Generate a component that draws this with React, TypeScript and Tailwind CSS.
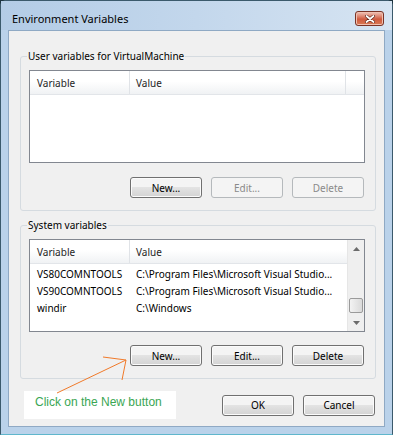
const sysRows = [
  { name: "VS80COMNTOOLS", value: "C:\\Program Files\\Microsoft Visual Studio..." },
  { name: "VS90COMNTOOLS", value: "C:\\Program Files\\Microsoft Visual Studio..." },
  { name: "windir", value: "C:\\Windows" },
];

function Button({ label, disabled = false }: { label: string; disabled?: boolean }) {
  if (disabled) {
    return (
      <button className="w-[72px] h-[21px] rounded-[3px] border border-[#b5b9bc] bg-[#f4f4f4] text-[#8a8a8a] leading-none">
        {label}
      </button>
    );
  }
  return (
    <button className="w-[72px] h-[21px] rounded-[3px] border border-[#707070] bg-linear-to-b from-[#f4f4f4] from-45% via-[#e3e3e3] via-50% to-[#d3d3d3] text-black leading-none shadow-[inset_0_0_0_1px_#fbfbfb]">
      {label}
    </button>
  );
}

function ListHeader({ filler }: { filler: boolean }) {
  return (
    <div className="flex h-[24px] border-b border-[#e2e5e9] bg-linear-to-b from-white from-45% to-[#f0f2f4] text-[#1e1e1e]">
      <div className="w-[100px] pl-[7px] pt-[1px] flex items-center border-r border-[#e0e3e7]">Variable</div>
      {filler ? (
        <>
          <div className="w-[216px] pl-[6px] pt-[1px] flex items-center border-r border-[#e0e3e7]">Value</div>
          <div className="flex-1" />
        </>
      ) : (
        <div className="flex-1 pl-[6px] pt-[1px] flex items-center">Value</div>
      )}
    </div>
  );
}

function ScrollBar() {
  return (
    <div className="w-[17px] flex flex-col bg-[#efefef] border-l border-[#e6e6e6]">
      <div className="h-[17px] flex items-center justify-center">
        <svg width="7" height="4" viewBox="0 0 7 4">
          <path d="M0 4 L3.5 0 L7 4 Z" fill="#6b6b6b" />
        </svg>
      </div>
      <div className="flex-1 flex flex-col justify-end px-[1px] pb-[1px]">
        <div className="h-[15px] rounded-[2px] border border-[#9a9a9a] bg-linear-to-r from-[#f3f3f3] to-[#dadada]" />
      </div>
      <div className="h-[17px] flex items-center justify-center">
        <svg width="7" height="4" viewBox="0 0 7 4">
          <path d="M0 0 L3.5 4 L7 0 Z" fill="#6b6b6b" />
        </svg>
      </div>
    </div>
  );
}

export default function App() {
  return (
    <div className="relative w-[393px] h-[435px] bg-[#1d3440] font-['Noto_Sans',sans-serif] text-[10px] text-black">
      <div className="h-full flex flex-col rounded-t-[6px] border border-[#3b5a6c] border-b-[#5fb6cc] bg-[#bad2ea] px-[7px] pb-[7px]">
        {/* Title bar */}
        <div className="h-[29px] flex items-start justify-between bg-linear-to-r from-[#b3cce6] via-[#c3d7ec] to-[#d6e4f2] -mx-[7px] px-[7px]">
          <div className="pt-[11px] pl-[4px] text-[11px] leading-[14px] text-black">Environment Variables</div>
          <div className="mt-[10px] mr-[1px] w-[29px] h-[15px] rounded-[3px] border border-[#7a3326] bg-linear-to-b from-[#eab2a4] from-10% via-[#cf5a3f] via-55% to-[#d97a55] flex items-center justify-center shadow-[inset_0_0_0_1px_#f0c0b0]">
            <svg width="10" height="8" viewBox="0 0 10 8">
              <path d="M1.5 1 L8.5 7 M8.5 1 L1.5 7" stroke="#5a2418" strokeWidth="3" strokeLinecap="round" />
              <path d="M1.5 1 L8.5 7 M8.5 1 L1.5 7" stroke="#ffffff" strokeWidth="1.8" strokeLinecap="round" />
            </svg>
          </div>
        </div>

        {/* Client area */}
        <div className="flex-1 flex flex-col bg-[#f0f0f0] border border-[#8fa9c4]">
          <fieldset className="mt-[18px] ml-[11px] mr-[8px] pt-[7px] pb-[12px] pl-[8px] pr-[10px] border border-[#d5dbe0] rounded-[3px]">
            <legend className="-ml-[2px] px-[1px] leading-[14px]">User variables for VirtualMachine</legend>
            <div className="h-[93px] border border-[#828790] bg-white">
              <ListHeader filler />
            </div>
            <div className="mt-[14px] flex justify-end gap-[9px] pr-[1px]">
              <Button label="New..." />
              <Button label="Edit..." disabled />
              <Button label="Delete" disabled />
            </div>
          </fieldset>

          <fieldset className="mt-[7px] ml-[11px] mr-[8px] pt-[7px] pb-[12px] pl-[8px] pr-[10px] border border-[#d5dbe0] rounded-[3px]">
            <legend className="-ml-[2px] px-[1px] leading-[14px]">System variables</legend>
            <div className="h-[93px] border border-[#828790] bg-white flex">
              <div className="flex-1 flex flex-col">
                <ListHeader filler={false} />
                <div className="pt-[2px]">
                  {sysRows.map((r) => (
                    <div key={r.name} className="h-[17px] flex items-center whitespace-nowrap">
                      <div className="w-[100px] pl-[7px]">{r.name}</div>
                      <div className="pl-[6px]">{r.value}</div>
                    </div>
                  ))}
                </div>
              </div>
              <ScrollBar />
            </div>
            <div className="mt-[13px] flex justify-end gap-[9px] pr-[1px]">
              <Button label="New..." />
              <Button label="Edit..." />
              <Button label="Delete" />
            </div>
          </fieldset>

          <div className="mt-[12px] ml-[15px] mr-[9px] flex items-center justify-between">
            <div className="w-[152px] h-[28px] bg-white pt-[4px] pl-[11px] font-['Liberation_Sans',Arial,sans-serif] text-[12px] leading-[14px] text-[#3aa653]">
              Click on the New button
            </div>
            <div className="flex gap-[9px]">
              <Button label="OK" />
              <Button label="Cancel" />
            </div>
          </div>
        </div>
      </div>

      {/* Orange annotation arrow */}
      <svg className="absolute inset-0 pointer-events-none" width="393" height="435" viewBox="0 0 393 435">
        <path d="M57 393 L126 360 M126 360 L103 357 M126 360 L122 380" stroke="#f07a2a" strokeWidth="1" fill="none" />
      </svg>
    </div>
  );
}
